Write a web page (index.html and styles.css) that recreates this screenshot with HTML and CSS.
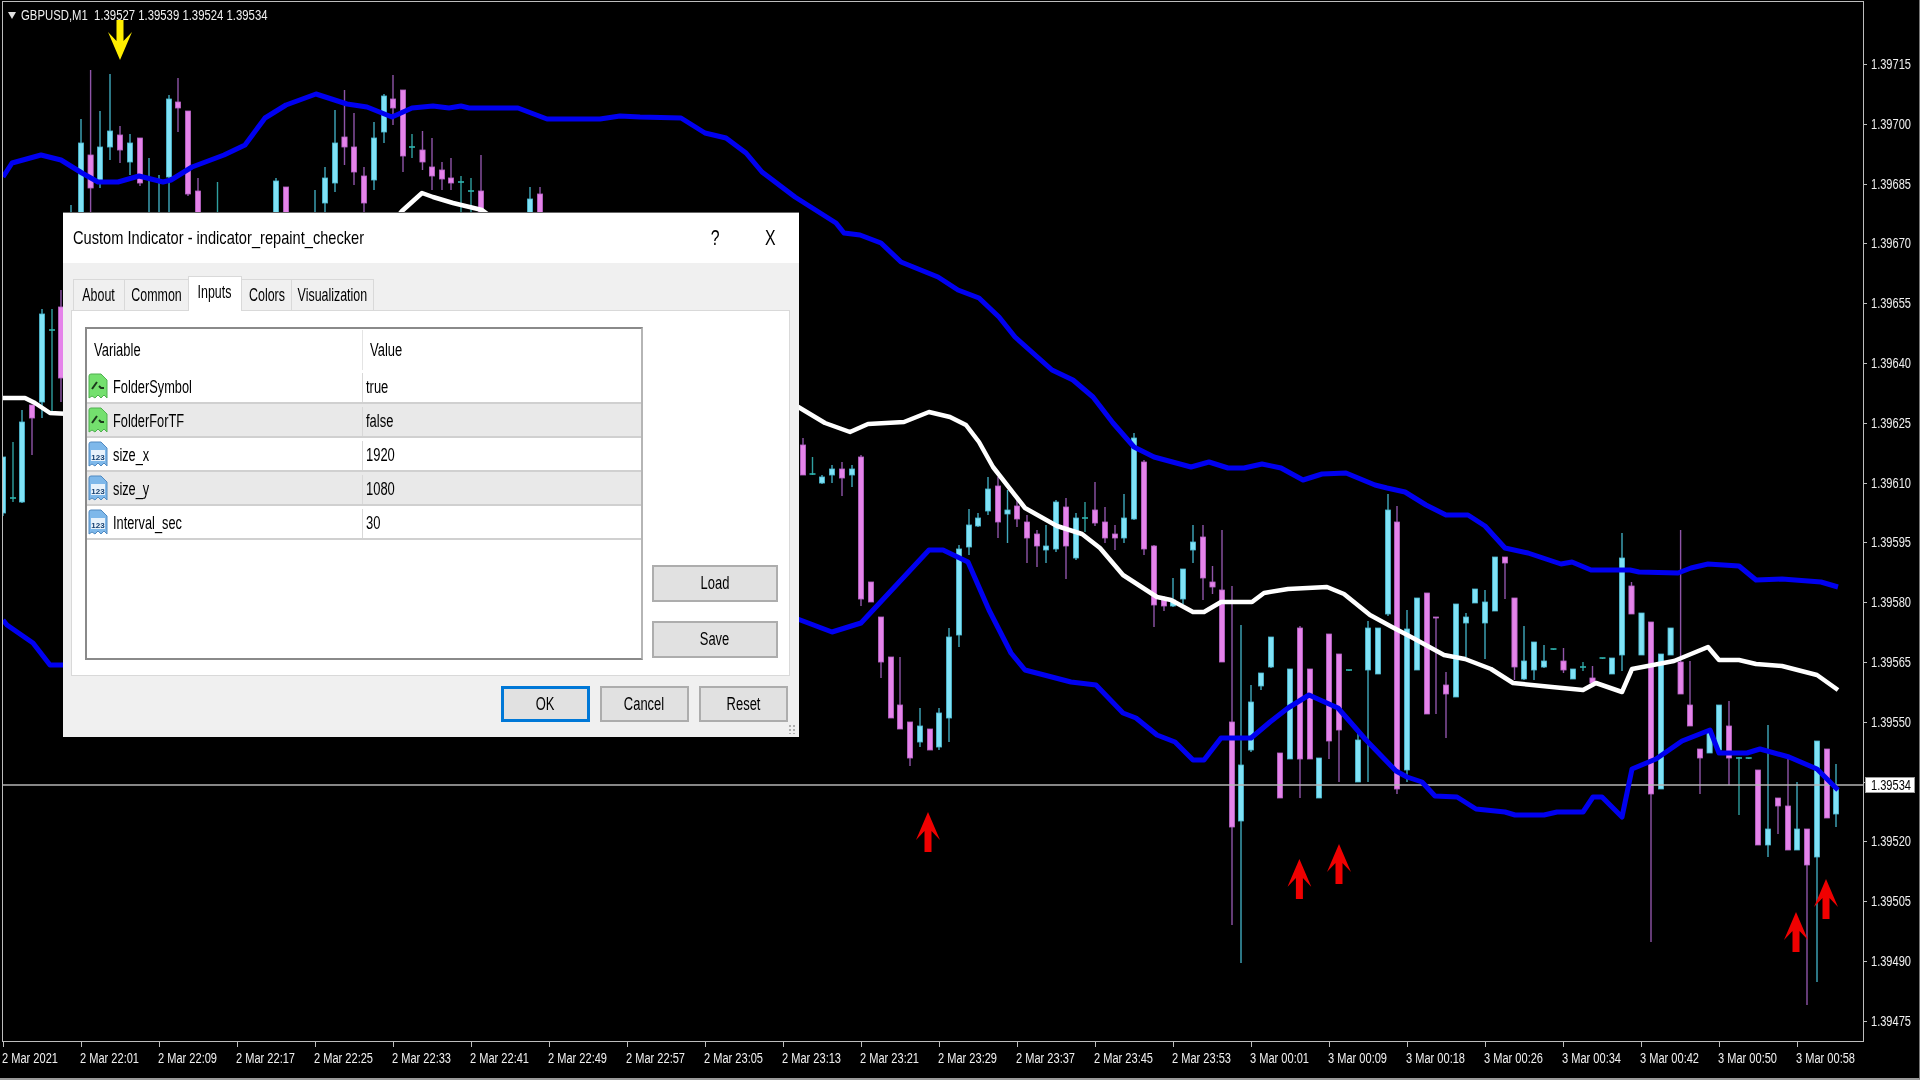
FILE: index.html
```html
<!DOCTYPE html>
<html lang="en">

<head>
    <meta charset="UTF-8">
    <title>GBPUSD,M1</title>
    <link rel="stylesheet" href="styles.css">
</head>

<body>

    <svg class="icon-defs" width="0" height="0">
        <symbol id="icon-bool" viewBox="0 0 20 27">
            <path d="M1 3 Q1 1 3 1 H13 L19 7 V25 L16 22 L13 25 L10 22 L7 25 L4 23 L1 25 Z" fill="#74e06e" stroke="#4fb04f"/>
            <path d="M4 16 L9 9 M11 13 L13 15 H16" fill="none" stroke="#1c3a1c" stroke-width="2"/>
        </symbol>
        <symbol id="icon-num" viewBox="0 0 20 27">
            <path d="M1 3 Q1 1 3 1 H13 L19 7 V25 L16 22 L13 25 L10 22 L7 25 L4 23 L1 25 Z" fill="#7eb8ea" stroke="#5089c0"/>
            <rect x="3" y="9" width="14" height="11" fill="#e8f2fb"/>
            <text x="10" y="18.5" class="icon-num-text">123</text>
        </symbol>
        <symbol id="arrow-up" viewBox="0 0 24 40">
            <path d="M12 0 L24 28 L15.5 19 V40 H8.5 V19 L0 28 Z"/>
        </symbol>
    </svg>

    <div class="screen">
        <div class="chart">
            <svg id="plot" class="plot" viewBox="3 2 1860 1039"></svg>

            <div class="legend"><span class="legend-arrow"></span><span class="legend-text">GBPUSD,M1&nbsp; 1.39527 1.39539 1.39524 1.39534</span></div>

            <div class="dialog">
                <div class="dialog-title">
                    <span class="txt txt-title">Custom Indicator - indicator_repaint_checker</span>
                    <div class="dialog-controls">
                        <span class="txt txt-mid">?</span>
                        <span class="txt txt-mid">X</span>
                    </div>
                </div>

                <div class="dialog-body">
                    <div class="tabs">
                        <div class="tab tab-about"><span class="txt txt-mid">About</span></div>
                        <div class="tab tab-common"><span class="txt txt-mid">Common</span></div>
                        <div class="tab tab-inputs active"><span class="txt txt-mid">Inputs</span></div>
                        <div class="tab tab-colors"><span class="txt txt-mid">Colors</span></div>
                        <div class="tab tab-visual"><span class="txt txt-mid">Visualization</span></div>
                    </div>

                    <div class="panel">
                        <div class="grid-box">
                            <div class="grid-head">
                                <div class="cell-var"><span class="txt">Variable</span></div>
                                <div class="cell-val"><span class="txt">Value</span></div>
                            </div>
                            <div class="grid-row">
                                <div class="cell-var"><svg class="row-icon"><use href="#icon-bool"/></svg><span class="txt">FolderSymbol</span></div>
                                <div class="cell-val"><span class="txt">true</span></div>
                            </div>
                            <div class="grid-row">
                                <div class="cell-var"><svg class="row-icon"><use href="#icon-bool"/></svg><span class="txt">FolderForTF</span></div>
                                <div class="cell-val"><span class="txt">false</span></div>
                            </div>
                            <div class="grid-row">
                                <div class="cell-var"><svg class="row-icon"><use href="#icon-num"/></svg><span class="txt">size_x</span></div>
                                <div class="cell-val"><span class="txt">1920</span></div>
                            </div>
                            <div class="grid-row">
                                <div class="cell-var"><svg class="row-icon"><use href="#icon-num"/></svg><span class="txt">size_y</span></div>
                                <div class="cell-val"><span class="txt">1080</span></div>
                            </div>
                            <div class="grid-row">
                                <div class="cell-var"><svg class="row-icon"><use href="#icon-num"/></svg><span class="txt">Interval_sec</span></div>
                                <div class="cell-val"><span class="txt">30</span></div>
                            </div>
                        </div>

                        <div class="side-buttons">
                            <button class="btn"><span class="txt txt-mid">Load</span></button>
                            <button class="btn"><span class="txt txt-mid">Save</span></button>
                        </div>
                    </div>

                    <div class="dialog-footer">
                        <button class="btn btn-foot btn-default"><span class="txt txt-mid">OK</span></button>
                        <button class="btn btn-foot"><span class="txt txt-mid">Cancel</span></button>
                        <button class="btn btn-foot"><span class="txt txt-mid">Reset</span></button>
                    </div>

                    <div class="grip"></div>
                </div>
            </div>
        </div>

        <div class="price-axis">
            <div class="price"><span class="axis-txt">1.39715</span></div>
            <div class="price"><span class="axis-txt">1.39700</span></div>
            <div class="price"><span class="axis-txt">1.39685</span></div>
            <div class="price"><span class="axis-txt">1.39670</span></div>
            <div class="price"><span class="axis-txt">1.39655</span></div>
            <div class="price"><span class="axis-txt">1.39640</span></div>
            <div class="price"><span class="axis-txt">1.39625</span></div>
            <div class="price"><span class="axis-txt">1.39610</span></div>
            <div class="price"><span class="axis-txt">1.39595</span></div>
            <div class="price"><span class="axis-txt">1.39580</span></div>
            <div class="price"><span class="axis-txt">1.39565</span></div>
            <div class="price"><span class="axis-txt">1.39550</span></div>
            <div class="price"></div>
            <div class="price"><span class="axis-txt">1.39520</span></div>
            <div class="price"><span class="axis-txt">1.39505</span></div>
            <div class="price"><span class="axis-txt">1.39490</span></div>
            <div class="price"><span class="axis-txt">1.39475</span></div>
            <div class="price-tag"><span class="axis-txt">1.39534</span></div>
        </div>

        <div class="time-axis">
            <div class="time"><span class="axis-txt">2 Mar 2021</span></div>
            <div class="time"><span class="axis-txt">2 Mar 22:01</span></div>
            <div class="time"><span class="axis-txt">2 Mar 22:09</span></div>
            <div class="time"><span class="axis-txt">2 Mar 22:17</span></div>
            <div class="time"><span class="axis-txt">2 Mar 22:25</span></div>
            <div class="time"><span class="axis-txt">2 Mar 22:33</span></div>
            <div class="time"><span class="axis-txt">2 Mar 22:41</span></div>
            <div class="time"><span class="axis-txt">2 Mar 22:49</span></div>
            <div class="time"><span class="axis-txt">2 Mar 22:57</span></div>
            <div class="time"><span class="axis-txt">2 Mar 23:05</span></div>
            <div class="time"><span class="axis-txt">2 Mar 23:13</span></div>
            <div class="time"><span class="axis-txt">2 Mar 23:21</span></div>
            <div class="time"><span class="axis-txt">2 Mar 23:29</span></div>
            <div class="time"><span class="axis-txt">2 Mar 23:37</span></div>
            <div class="time"><span class="axis-txt">2 Mar 23:45</span></div>
            <div class="time"><span class="axis-txt">2 Mar 23:53</span></div>
            <div class="time"><span class="axis-txt">3 Mar 00:01</span></div>
            <div class="time"><span class="axis-txt">3 Mar 00:09</span></div>
            <div class="time"><span class="axis-txt">3 Mar 00:18</span></div>
            <div class="time"><span class="axis-txt">3 Mar 00:26</span></div>
            <div class="time"><span class="axis-txt">3 Mar 00:34</span></div>
            <div class="time"><span class="axis-txt">3 Mar 00:42</span></div>
            <div class="time"><span class="axis-txt">3 Mar 00:50</span></div>
            <div class="time"><span class="axis-txt">3 Mar 00:58</span></div>
        </div>
    </div>

    <script src="chart.js"></script>

</body>

</html>
```

FILE: styles.css
```css
html,
body {
    margin: 0;
    padding: 0;
    height: 100%;
    overflow: hidden;
    background-color: #000;
}

body {
    font-family: 'Liberation Sans', Arial, sans-serif;
}

.icon-defs {
    position: absolute;
}

.icon-num-text {
    font-family: 'Liberation Sans', sans-serif;
    font-size: 8px;
    font-weight: bold;
    fill: #143f70;
    text-anchor: middle;
}

.screen {
    width: 1920px;
    height: 1080px;
    box-sizing: border-box;
    padding: 1px 0 0 2px;
    border-right: 1px solid #777;
    border-bottom: 2px solid #999;
    display: grid;
    grid-template-columns: 1862px 1fr;
    grid-template-rows: 1041px 1fr;
    color: #f0f0f0;
    /* the source screenshot is a soft, rescaled capture */
    filter: blur(.5px);
}

/* chart pane */
.chart {
    position: relative;
    box-sizing: border-box;
    border: 1px solid #bdbdbd;
}

.plot {
    display: block;
    width: 1860px;
    height: 1039px;
}

.legend {
    position: absolute;
    left: 5px;
    top: 5px;
    display: flex;
    align-items: center;
    font-size: 14px;
    line-height: 16px;
    white-space: nowrap;
}

.legend-arrow {
    width: 0;
    height: 0;
    margin-right: 5px;
    border-left: 4px solid transparent;
    border-right: 4px solid transparent;
    border-top: 7px solid #e0e0e0;
}

.legend-text {
    display: inline-block;
    transform: scaleX(.81);
    transform-origin: left;
}

/* price and time axes */
.axis-txt {
    display: inline-block;
    transform: scaleX(.79);
    transform-origin: left center;
    white-space: nowrap;
}

.price-axis {
    position: relative;
    padding-top: 55px;
}

.price {
    position: relative;
    height: 59.8px;
    box-sizing: border-box;
    padding-left: 7px;
    font-size: 14px;
    line-height: 16px;
}

.price::before {
    content: "";
    position: absolute;
    left: 0;
    top: 8px;
    width: 3px;
    height: 1px;
    background-color: #bdbdbd;
}

.price-tag {
    position: absolute;
    left: 1px;
    top: 776px;
    width: 50px;
    height: 16px;
    box-sizing: border-box;
    padding-left: 5px;
    border: 1px solid #999;
    background-color: #fff;
    color: #000;
    font-size: 14px;
    line-height: 14px;
}

.time-axis {
    grid-column: 1 / 3;
    display: flex;
    font-size: 14px;
    line-height: 16px;
}

.time {
    position: relative;
    flex: 0 0 78px;
    box-sizing: border-box;
    padding-top: 8px;
    white-space: nowrap;
}

.time::before {
    content: "";
    position: absolute;
    left: 1px;
    top: 0;
    width: 1px;
    height: 5px;
    background-color: #bdbdbd;
}

/* dialog window */
.dialog {
    position: absolute;
    left: 60px;
    top: 210px;
    width: 736px;
    height: 525px;
    display: flex;
    flex-direction: column;
    background-color: #f0f0f0;
    color: #000;
    font-size: 19px;
}

.txt {
    display: inline-block;
    transform: scaleX(.72);
    transform-origin: left center;
    white-space: nowrap;
}

.txt-mid {
    transform-origin: center;
}

.txt-title {
    transform: scaleX(.77);
}

.dialog-title {
    flex: 0 0 51px;
    display: flex;
    align-items: center;
    justify-content: space-between;
    padding: 0 21px 0 10px;
    background-color: #fff;
    border-top: 1px solid #666;
    box-sizing: border-box;
}

.dialog-controls {
    display: flex;
    gap: 42px;
    font-size: 22px;
}

.dialog-body {
    position: relative;
    flex: 1;
    display: flex;
    flex-direction: column;
    padding: 13px 9px 0 8px;
}

.tabs {
    display: flex;
    align-items: flex-end;
    height: 34px;
    padding-left: 3px;
}

.tab {
    box-sizing: border-box;
    height: 31px;
    display: flex;
    align-items: center;
    justify-content: center;
    background-color: #f0f0f0;
    border: 1px solid #d9d9d9;
    border-bottom: none;
    margin-left: -1px;
    font-size: 18px;
}

.tab .txt {
    transform: scaleX(.69);
}

.tab-about {
    width: 52px;
}

.tab-common {
    width: 65px;
}

.tab-inputs {
    width: 54px;
}

.tab-colors {
    width: 51px;
}

.tab-visual {
    width: 83px;
}

.tab.active {
    height: 35px;
    margin-bottom: -1px;
    background-color: #fff;
    position: relative;
    z-index: 1;
    padding-bottom: 4px;
}

.panel {
    flex: 0 0 366px;
    box-sizing: border-box;
    display: flex;
    background-color: #fff;
    border: 1px solid #d9d9d9;
    padding: 16px 0 0 13px;
}

.grid-box {
    width: 558px;
    height: 333px;
    box-sizing: border-box;
    border: 2px solid;
    border-color: #8a8a8a #b5b5b5 #8a8a8a #8a8a8a;
    background-color: #fff;
}

.grid-head {
    height: 41px;
    padding-top: 1px;
    box-sizing: border-box;
    display: grid;
    grid-template-columns: 275px 1fr;
    align-items: center;
    font-size: 18px;
}

.grid-head > div {
    height: 100%;
    display: flex;
    align-items: center;
}

.grid-head .cell-var {
    padding-left: 7px;
    box-sizing: border-box;
}

.grid-head .cell-val {
    padding-left: 7px;
    box-sizing: border-box;
    border-left: 1px solid #e4e4e4;
}

.grid-row {
    height: 34px;
    box-sizing: border-box;
    display: grid;
    grid-template-columns: 275px 1fr;
    padding-top: 3px;
    border-bottom: 2px solid #d0d0d0;
    font-size: 18px;
}

.grid-row:nth-child(odd) {
    background-color: #e9e9e9;
}

.cell-var {
    display: flex;
    align-items: center;
    gap: 5px;
    padding-left: 1px;
}

.grid-row .cell-var .txt {
    transform: scaleX(.71);
}

.cell-val {
    display: flex;
    align-items: center;
    padding-left: 3px;
    border-left: 1px solid #d8d8d8;
}

.row-icon {
    width: 20px;
    height: 27px;
    margin-top: -2px;
    flex: none;
}

.side-buttons {
    display: flex;
    flex-direction: column;
    justify-content: flex-end;
    gap: 19px;
    width: 126px;
    height: 333px;
    margin-left: 9px;
    padding-bottom: 2px;
    box-sizing: border-box;
}

.btn {
    height: 37px;
    padding: 0;
    background-color: #e1e1e1;
    border: 2px solid #adadad;
    color: #000;
    font-family: 'Liberation Sans', Arial, sans-serif;
    font-size: 18px;
    display: flex;
    align-items: center;
    justify-content: center;
}

.dialog-footer {
    display: flex;
    justify-content: flex-end;
    gap: 10px;
    padding: 10px 2px 0 0;
}

.btn-foot {
    width: 89px;
    height: 36px;
    padding-top: 1px;
}

.btn-default {
    border: 3px solid #0078d7;
}

.grip {
    position: absolute;
    right: 2px;
    bottom: 3px;
    width: 9px;
    height: 10px;
    background-image: radial-gradient(#b0b0b0 1.2px, transparent 1.4px);
    background-size: 4px 4px;
}
```

FILE: chart.js
```js
// x, wick top, body top, body bottom, wick bottom, type (u = up, d = down, t = doji)
const candles = [
    [3, 457, 457, 513, 516, 'u'], [13, 442, 498, 499, 502, 't'], [22, 410, 422, 502, 503, 'u'],
    [32, 405, 405, 418, 455, 'd'], [42, 309, 314, 402, 418, 'u'], [52, 309, 330, 331, 415, 't'],
    [61, 290, 307, 378, 402, 'd'],
    [71, 205, 214, 214, 214, 'u'], [81, 119, 143, 214, 214, 'u'], [90.6, 70, 155, 188, 214, 'd'],
    [100, 111, 147, 182, 188, 'u'], [110, 74, 131, 147, 160, 'u'], [120, 126, 135, 150, 163, 'd'],
    [130, 134, 143, 162, 175, 'u'], [140, 138, 138, 183, 186, 'd'], [149, 158, 214, 214, 214, 'u'],
    [159, 175, 214, 214, 214, 'u'], [169, 95, 99, 177, 214, 'u'], [178, 78, 102, 108, 132, 'd'],
    [188, 111, 111, 194, 196, 'd'], [198, 178, 191, 214, 214, 'd'], [217.5, 182, 214, 214, 214, 't'],
    [276, 178, 181, 214, 214, 'u'], [286, 187, 187, 214, 214, 'd'], [315, 190, 214, 214, 214, 'u'],
    [325, 167, 178, 203, 214, 'u'], [335, 110, 143, 183, 192, 'u'], [344.5, 90, 137, 147, 165, 'd'],
    [354, 113, 147, 172, 185, 'd'], [364, 167, 176, 203, 214, 'd'], [374, 122, 138, 180, 190, 'u'],
    [384, 94, 96, 132, 143, 'u'], [393, 75, 99, 108, 125, 'd'], [403, 90, 90, 156, 172, 'd'],
    [412, 134, 147, 148, 158, 't'], [422.5, 131, 150, 162, 170, 'd'], [432, 138, 167, 176, 190, 'd'],
    [442, 162, 170, 179, 190, 'd'], [451, 158, 178, 183, 190, 'd'], [461, 176, 182, 183, 214, 't'],
    [471, 178, 191, 192, 214, 't'], [481, 155, 191, 214, 214, 'd'], [530, 187, 199, 214, 214, 'u'],
    [540, 187, 194, 214, 214, 'd'],

    [803, 438, 445, 475, 475, 'd'], [812.5, 457, 474, 475, 475, 't'], [822, 475, 477, 483, 484, 'u'],
    [832, 465, 469, 475, 483, 'u'], [842, 462, 469, 478, 496, 'd'], [852, 465, 469, 475, 487, 'u'],
    [861, 455, 457, 599, 606, 'd'], [871, 582, 582, 602, 602, 'd'], [881, 617, 617, 662, 678, 'd'],
    [891, 657, 657, 718, 718, 'd'], [900, 657, 705, 729, 729, 'd'], [910, 722, 722, 758, 766, 'd'],
    [920, 708, 726, 742, 747, 'u'], [930, 729, 729, 750, 750, 'd'], [939, 708, 713, 747, 750, 'u'],
    [949, 628, 637, 718, 742, 'u'], [959, 545, 549, 635, 647, 'u'], [969, 509, 525, 547, 555, 'u'],
    [978, 513, 518, 526, 527, 'u'], [988, 477, 489, 511, 515, 'u'], [998, 477, 486, 522, 538, 'd'],
    [1007.5, 490, 510, 514, 543, 'u'], [1017, 500, 506, 519, 527, 'd'], [1027, 515, 522, 538, 563, 'd'],
    [1037, 530, 534, 546, 567, 'd'], [1046, 525, 546, 550, 563, 'u'], [1056, 500, 502, 549, 552, 'u'],
    [1066, 498, 507, 546, 579, 'd'], [1076, 513, 518, 558, 560, 'u'], [1085, 502, 518, 519, 532, 't'],
    [1095, 482, 510, 523, 526, 'd'], [1105, 507, 522, 538, 543, 'd'], [1115, 525, 534, 538, 550, 'd'],
    [1124, 494, 518, 538, 543, 'u'], [1134, 433, 438, 519, 520, 'u'], [1144, 460, 462, 549, 555, 'd'],
    [1154, 545, 546, 605, 627, 'd'], [1164, 596, 600, 606, 611, 'd'], [1173, 578, 600, 606, 607, 'u'],
    [1183, 569, 569, 599, 604, 'u'], [1193, 525, 542, 550, 563, 'u'], [1203, 525, 537, 578, 600, 'd'],
    [1212.5, 566, 582, 587, 594, 'd'], [1222, 530, 590, 662, 662, 'd'], [1232, 586, 722, 827, 925, 'd'],
    [1241, 625, 765, 821, 963, 'u'], [1251, 685, 702, 750, 752, 'u'], [1261, 673, 673, 686, 690, 'u'],
    [1271, 637, 637, 667, 668, 'u'], [1280, 753, 753, 798, 798, 'd'], [1290, 669, 669, 759, 759, 'u'],
    [1300, 626, 628, 759, 798, 'd'], [1310, 669, 669, 759, 759, 'd'], [1319, 758, 758, 798, 798, 'u'],
    [1329, 634, 634, 741, 759, 'd'], [1339, 654, 654, 730, 782, 'd'], [1349, 670, 670, 671, 671, 't'],
    [1358, 728, 740, 782, 782, 'u'], [1368, 621, 628, 670, 782, 'u'], [1378, 628, 628, 674, 674, 'u'],
    [1388, 494, 510, 614, 616, 'u'], [1397, 506, 522, 789, 794, 'd'], [1407, 610, 629, 770, 782, 'u'],
    [1417, 598, 598, 670, 670, 'u'], [1427, 593, 593, 714, 714, 'd'], [1436, 617, 617, 618, 714, 'd'],
    [1446, 672, 685, 694, 738, 'd'], [1456, 604, 604, 697, 697, 'u'], [1466, 613, 617, 623, 657, 'u'],
    [1475, 589, 589, 603, 603, 'u'], [1485, 590, 602, 623, 659, 'u'], [1495, 557, 557, 611, 611, 'u'],
    [1505, 557, 557, 563, 599, 'd'], [1514.5, 598, 598, 667, 680, 'd'], [1524, 626, 661, 679, 680, 'u'],
    [1534, 642, 642, 670, 680, 'u'], [1544, 645, 661, 667, 668, 'u'], [1553.5, 649, 649, 650, 650, 't'],
    [1563.5, 648, 661, 670, 673, 'd'], [1573, 669, 669, 679, 679, 'u'], [1583, 662, 667, 668, 671, 't'],
    [1592.5, 666, 678, 683, 685, 'd'], [1602.5, 658, 658, 659, 659, 't'], [1612, 658, 658, 674, 674, 'u'],
    [1622, 533, 558, 655, 671, 'u'], [1631.5, 582, 586, 614, 614, 'd'], [1641.5, 613, 613, 655, 655, 'u'],
    [1651, 622, 622, 794, 942, 'd'], [1661, 654, 654, 789, 789, 'u'], [1670.6, 628, 628, 655, 655, 'u'],
    [1680.6, 530, 662, 694, 694, 'd'], [1690, 661, 705, 726, 726, 'd'], [1700, 749, 749, 758, 794, 'd'],
    [1709.6, 731, 731, 753, 753, 'u'], [1719, 705, 705, 750, 750, 'u'], [1729, 701, 726, 758, 785, 'd'],
    [1739, 757, 758, 759, 815, 't'], [1748.7, 758, 758, 759, 759, 't'], [1758, 770, 770, 845, 845, 'd'],
    [1768, 725, 829, 845, 857, 'u'], [1778, 798, 798, 806, 834, 'd'], [1788, 759, 806, 850, 850, 'd'],
    [1797, 782, 829, 850, 850, 'u'], [1807, 829, 829, 865, 1005, 'd'], [1817, 741, 741, 857, 982, 'u'],
    [1827, 749, 749, 818, 818, 'd'], [1836, 764, 789, 814, 827, 'u']
];

const upperBand = [
    [3, 177], [12, 163], [41, 155], [61, 160], [82, 173], [98, 182], [118, 182], [139, 176], [163, 182],
    [171, 180], [192, 167], [224, 155], [245, 145], [265, 118], [286, 105], [316, 94], [347, 104],
    [367, 107], [392, 117], [412, 108], [433, 106], [449, 108], [461, 106], [469, 108], [518, 108],
    [547, 119], [600, 119], [620, 116], [640, 117], [681, 118], [705, 133], [726, 138], [746, 153],
    [762, 172], [795, 197], [836, 223], [844, 233], [860, 235], [881, 243], [901, 262], [938, 277],
    [958, 290], [979, 298], [999, 317], [1015, 337], [1052, 370], [1073, 380], [1093, 397], [1113, 423],
    [1134, 447], [1154, 457], [1191, 467], [1209, 462], [1228, 468], [1244, 468], [1262, 464], [1281, 468],
    [1303, 480], [1322, 474], [1346, 473], [1375, 485], [1387, 488], [1405, 492], [1426, 505], [1446, 515],
    [1468, 515], [1485, 526], [1505, 548], [1528, 553], [1561, 564], [1572, 562], [1591, 570], [1630, 570],
    [1639, 572], [1678, 573], [1691, 568], [1708, 564], [1739, 566], [1756, 580], [1782, 579], [1821, 582],
    [1838, 587]
];

const middleBandLeft = [[3, 398], [25, 398], [35, 403], [50, 413], [70, 414]];
const middleBandTop = [[395, 220], [402, 211], [422, 193], [433, 197], [453, 203], [482, 210], [490, 216]];
const middleBand = [
    [795, 405], [825, 423], [850, 432], [868, 424], [904, 422], [929, 412], [950, 417], [966, 425], [979, 442],
    [993, 467], [1025, 508], [1057, 526], [1082, 534], [1100, 548], [1123, 575], [1157, 597], [1171, 600],
    [1193, 612], [1204, 612], [1221, 602], [1252, 602], [1264, 593], [1288, 589], [1327, 587], [1344, 594],
    [1370, 615], [1392, 627], [1413, 638], [1444, 655], [1465, 659], [1491, 669], [1513, 683], [1552, 687],
    [1583, 690], [1596, 683], [1622, 692], [1632, 669], [1674, 661], [1708, 647], [1719, 660], [1739, 660],
    [1756, 664], [1782, 666], [1817, 675], [1838, 690]
];

const lowerBandLeft = [[3, 620], [7, 625], [33, 643], [50, 665], [70, 665]];
const lowerBand = [
    [795, 618], [832, 632], [861, 623], [929, 550], [943, 550], [968, 562], [989, 610], [1011, 653], [1025, 670],
    [1071, 682], [1096, 685], [1123, 713], [1136, 718], [1157, 735], [1175, 742], [1193, 760], [1204, 760],
    [1221, 738], [1251, 738], [1270, 722], [1288, 708], [1309, 695], [1338, 708], [1366, 740], [1396, 771],
    [1407, 777], [1422, 782], [1435, 796], [1457, 797], [1476, 809], [1505, 812], [1515, 815], [1544, 815],
    [1557, 812], [1583, 812], [1593, 797], [1602, 797], [1622, 817], [1632, 769], [1656, 759], [1682, 741],
    [1710, 730], [1719, 753], [1747, 753], [1760, 749], [1789, 757], [1817, 769], [1838, 790]
];

const upArrows = [[928, 812], [1299.4, 859], [1339, 844], [1796, 912], [1826, 879]];

const plot = document.getElementById('plot');

function addSvg(tag, attrs) {
    const el = document.createElementNS('http://www.w3.org/2000/svg', tag);
    Object.keys(attrs).forEach(key => el.setAttribute(key, attrs[key]));
    plot.appendChild(el);
    return el;
}

const wickColors = { u: '#3fa9bd', d: '#8f54a8', t: '#2f9f9f' };
const bodyColors = { u: '#7fe2f6', d: '#e583ea', t: '#2fb5b0' };
const bodyEdges = { u: '#4cb8d0', d: '#b763c6', t: '#2fb5b0' };

candles.forEach(([x, wickTop, bodyTop, bodyBottom, wickBottom, type]) => {
    addSvg('line', { x1: x, x2: x, y1: wickTop, y2: wickBottom, stroke: wickColors[type], 'stroke-width': 1.4 });
    if (type === 't') {
        addSvg('line', { x1: x - 3, x2: x + 3, y1: bodyTop, y2: bodyTop, stroke: bodyColors.t, 'stroke-width': 1.6 });
    } else {
        addSvg('rect', {
            x: x - 2.6, y: bodyTop, width: 5.2, height: bodyBottom - bodyTop,
            fill: bodyColors[type], stroke: bodyEdges[type], 'stroke-width': 0.8
        });
    }
});

// current bid line
addSvg('line', { x1: 3, x2: 1863, y1: 785, y2: 785, stroke: '#b5b5b5', 'stroke-width': 1.4 });

function addBand(points, color, width) {
    addSvg('polyline', {
        points: points.map(p => p.join(',')).join(' '),
        fill: 'none', stroke: color, 'stroke-width': width, 'stroke-linejoin': 'round'
    });
}

addBand(upperBand, '#0000f0', 5);
addBand(lowerBandLeft, '#0000f0', 5);
addBand(lowerBand, '#0000f0', 5);
addBand(middleBandLeft, '#fff', 4.5);
addBand(middleBandTop, '#fff', 4.5);
addBand(middleBand, '#fff', 4.5);

upArrows.forEach(([x, y]) => {
    addSvg('use', { href: '#arrow-up', x: x - 12, y: y, width: 24, height: 40, fill: '#f00000' });
});

// yellow arrow at the top of the chart
addSvg('use', {
    href: '#arrow-up', x: -132, y: -60, width: 24, height: 40, fill: '#ffee00',
    transform: 'rotate(180)'
});
```
